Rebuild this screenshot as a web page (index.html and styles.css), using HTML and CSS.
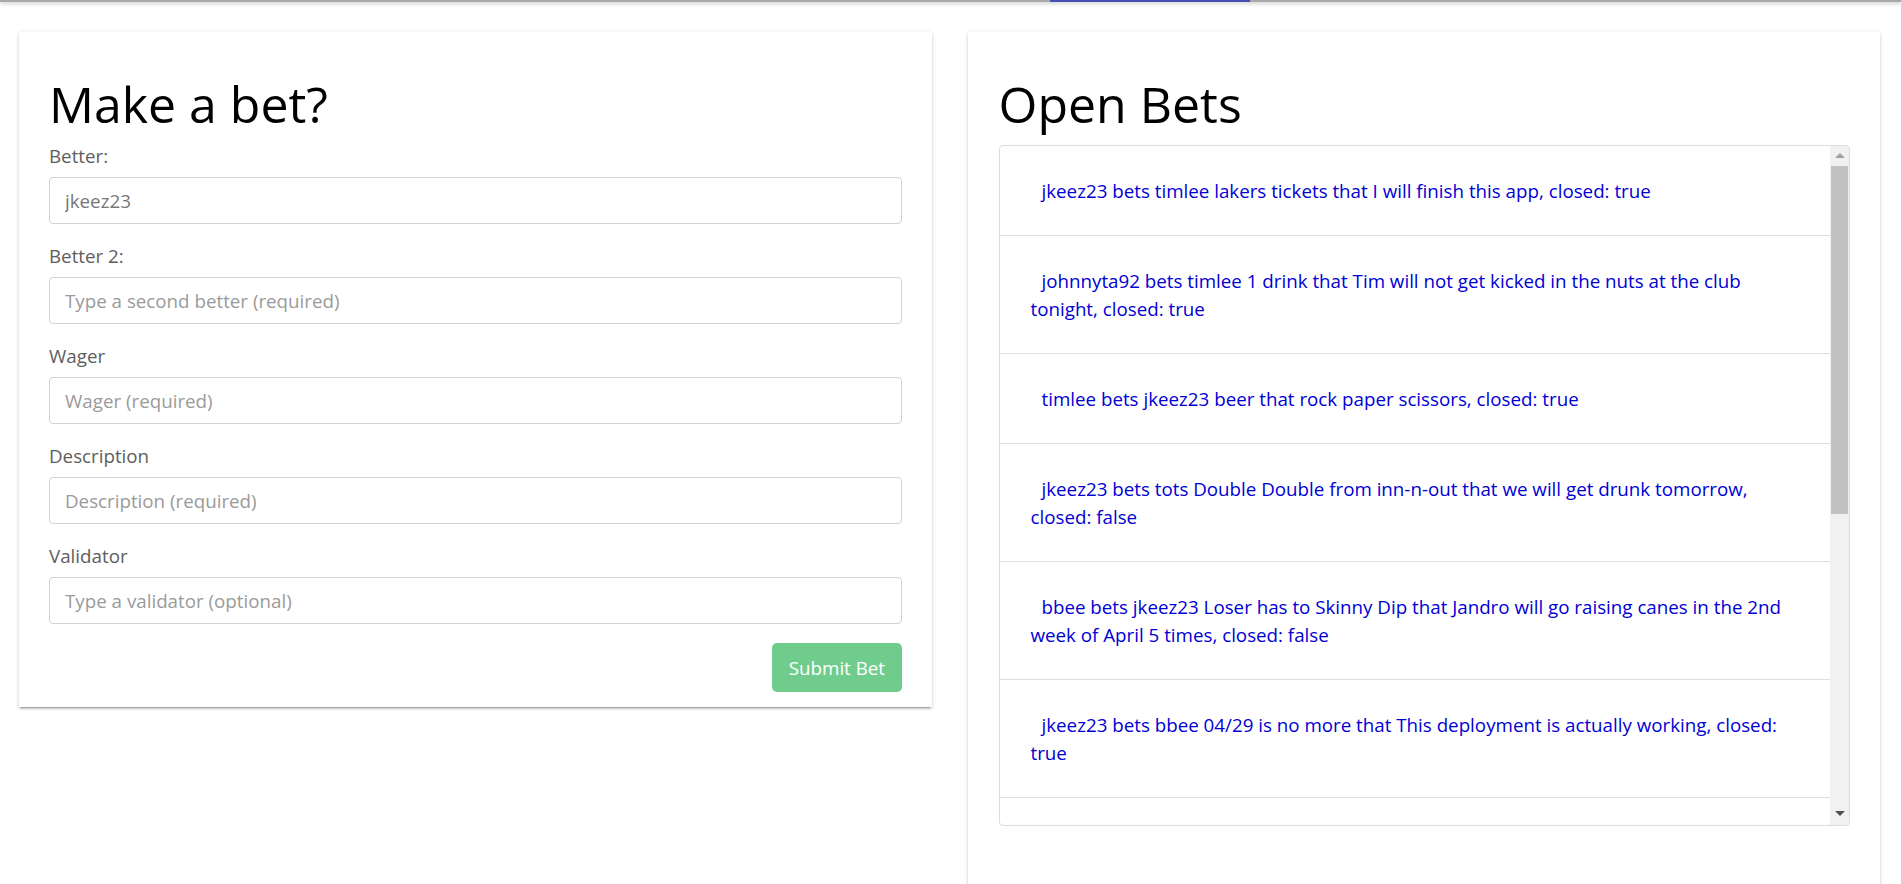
FILE: index.html
```html
<!DOCTYPE html>
<html lang="en">
<head>
<meta charset="utf-8">
<title>Bets</title>
<link rel="stylesheet" href="styles.css">
</head>
<body>
<header class="topbar">
  <div class="tab-indicator"></div>
</header>
<main class="layout">
  <section class="card card-form">
    <h1 class="card-title">Make a bet?</h1>
    <form class="bet-form">
      <div class="form-group">
        <label class="form-label" for="better">Better:</label>
        <input class="form-input form-input-value" id="better" type="text" value="jkeez23" readonly>
      </div>
      <div class="form-group">
        <label class="form-label" for="better2">Better 2:</label>
        <input class="form-input" id="better2" type="text" placeholder="Type a second better (required)">
      </div>
      <div class="form-group">
        <label class="form-label" for="wager">Wager</label>
        <input class="form-input" id="wager" type="text" placeholder="Wager (required)">
      </div>
      <div class="form-group">
        <label class="form-label" for="description">Description</label>
        <input class="form-input" id="description" type="text" placeholder="Description (required)">
      </div>
      <div class="form-group">
        <label class="form-label" for="validator">Validator</label>
        <input class="form-input" id="validator" type="text" placeholder="Type a validator (optional)">
      </div>
      <div class="form-actions">
        <button class="btn-submit" type="button">Submit Bet</button>
      </div>
    </form>
  </section>
  <section class="card card-list">
    <h1 class="card-title card-title-list">Open Bets</h1>
    <div class="list-box">
      <ul class="bet-list">
        <li class="bet-item"><a class="bet-link" href="#">jkeez23 bets timlee lakers tickets that I will finish this app, closed: true</a></li>
        <li class="bet-item"><a class="bet-link" href="#">johnnyta92 bets timlee 1 drink that Tim will not get kicked in the nuts at the club tonight, closed: true</a></li>
        <li class="bet-item"><a class="bet-link" href="#">timlee bets jkeez23 beer that rock paper scissors, closed: true</a></li>
        <li class="bet-item"><a class="bet-link" href="#">jkeez23 bets tots Double Double from inn-n-out that we will get drunk tomorrow, closed: false</a></li>
        <li class="bet-item"><a class="bet-link" href="#">bbee bets jkeez23 Loser has to Skinny Dip that Jandro will go raising canes in the 2nd week of April 5 times, closed: false</a></li>
        <li class="bet-item"><a class="bet-link" href="#">jkeez23 bets bbee 04/29 is no more that This deployment is actually working, closed: true</a></li>
        <li class="bet-item bet-item-empty"></li>
      </ul>
      <div class="scrollbar" aria-hidden="true">
        <div class="scroll-btn scroll-btn-up"><span class="arrow arrow-up"></span></div>
        <div class="scroll-track">
          <div class="scroll-thumb"></div>
        </div>
        <div class="scroll-btn scroll-btn-down"><span class="arrow arrow-down"></span></div>
      </div>
    </div>
  </section>
</main>
</body>
</html>
```

FILE: styles.css
```css
html, body {
  margin: 0;
  padding: 0;
  overflow: hidden;
  background: #ffffff;
}

body {
  font-family: "Open Sans", "Noto Sans", "Liberation Sans", sans-serif;
  font-size: 18.75px;
  line-height: 28px;
  color: #212529;
}

.topbar {
  height: 2px;
  background: #a8a8a8;
  box-shadow: 0 1px 4px rgba(0, 0, 0, 0.35);
  display: flex;
  padding-left: 1050px;
  position: relative;
  z-index: 2;
}

.tab-indicator {
  width: 200px;
  height: 2px;
  background: #4450b4;
}

.layout {
  display: grid;
  grid-template-columns: 1fr 1fr;
  column-gap: 36px;
  padding: 30px 21px 0 19px;
  align-items: start;
}

.card {
  background: #ffffff;
  box-shadow: 0 2px 2px 0 rgba(0, 0, 0, 0.14), 0 3px 1px -2px rgba(0, 0, 0, 0.2), 0 1px 5px 0 rgba(0, 0, 0, 0.12);
}

.card-form {
  padding: 42px 30px 15px 30px;
}

.card-list {
  padding: 42px 30px 120px 31px;
}

.card-title {
  margin: 0 0 8px 0;
  font-size: 50px;
  line-height: 60px;
  font-weight: 400;
  color: #000000;
}

.card-title-list {
  margin-bottom: 11px;
}

.bet-form {
  display: flex;
  flex-direction: column;
}

.form-group {
  display: flex;
  flex-direction: column;
  margin-bottom: 18px;
}

.form-label {
  display: block;
  line-height: 28px;
  margin-bottom: 7px;
  color: #5e5e5e;
  font-weight: 400;
}

.form-input {
  display: block;
  box-sizing: border-box;
  width: 100%;
  height: 47px;
  padding: 0 15px;
  border: 1px solid #cfd3d7;
  border-radius: 4px;
  font-family: inherit;
  font-size: 18.75px;
  color: #777777;
  background: #ffffff;
  outline: none;
}

.form-input::placeholder {
  color: #9a9a9a;
}

.form-actions {
  display: flex;
  justify-content: flex-end;
  padding-top: 1px;
}

.btn-submit {
  height: 49px;
  padding: 0 16.5px;
  border: none;
  border-radius: 5px;
  background: #70cc8d;
  color: #ffffff;
  font-family: inherit;
  font-size: 18.75px;
}

.list-box {
  display: flex;
  height: 681px;
  box-sizing: border-box;
  border: 1px solid #dcdcdc;
  border-radius: 4px;
  overflow: hidden;
}

.bet-list {
  flex: 1;
  list-style: none;
  margin: 0;
  padding: 0;
  overflow: hidden;
}

.bet-item {
  padding: 30.5px 31px;
  border-bottom: 1px solid #dedede;
  line-height: 28px;
  text-indent: 11px;
}

.bet-item-empty {
  height: 28px;
}

.bet-link {
  color: #0000d6;
  text-decoration: none;
}

.scrollbar {
  width: 19px;
  flex: none;
  display: flex;
  flex-direction: column;
  background: #f1f1f1;
}

.scroll-btn {
  height: 19px;
  flex: none;
  display: flex;
  justify-content: center;
  box-sizing: border-box;
}

.scroll-btn-up {
  align-items: flex-end;
  padding-bottom: 7px;
}

.scroll-btn-down {
  align-items: flex-start;
  padding-top: 5px;
}

.arrow {
  width: 0;
  height: 0;
  border-left: 5px solid transparent;
  border-right: 5px solid transparent;
}

.arrow-up {
  border-bottom: 5px solid #a3a3a3;
}

.arrow-down {
  border-top: 5px solid #505050;
}

.scroll-track {
  flex: 1;
  padding: 1px 1px 0 1px;
}

.scroll-thumb {
  height: 348px;
  background: #c1c1c1;
}
```
